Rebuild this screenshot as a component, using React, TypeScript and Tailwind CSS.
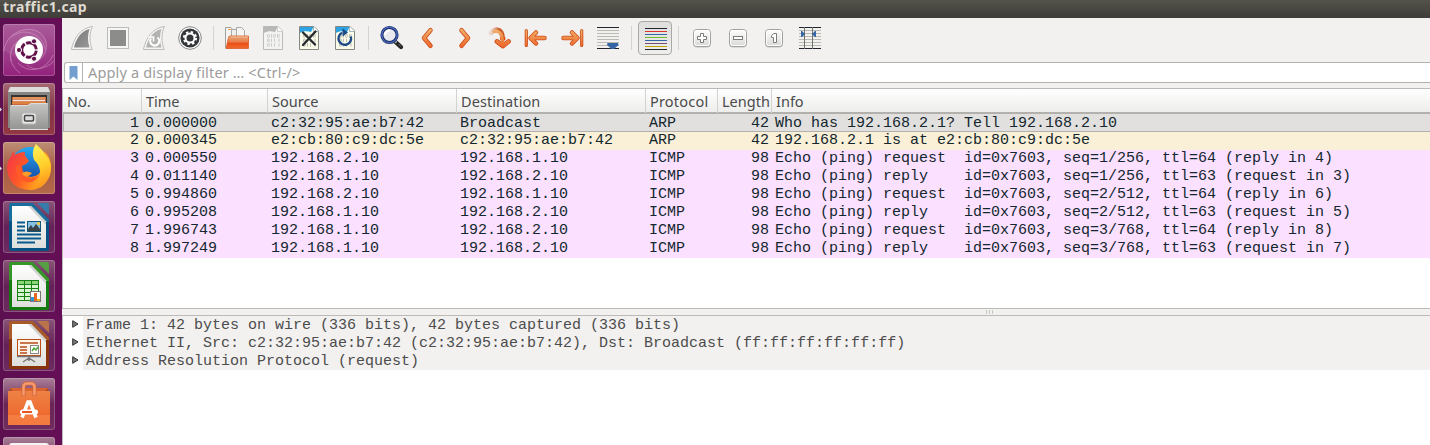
import type { ReactNode } from "react";

const UI = "font-['Noto_Sans',sans-serif]";
const MONO = "font-['Liberation_Mono',monospace]";

/* ---------- toolbar icons, each on a 36x36 grid ---------- */

function Fin({ restart = false }: { restart?: boolean }) {
  return (
    <g>
      <path d="M7.500 29.500C9.500 19 16 8 28.500 6.500C25 13 25.500 22 28 29.500Z" fill="#f6f6f5" stroke="#bcbcba" />
      <path d="M10 27.500C12 19 17 11 25.500 9C23.500 15 23.500 21 25.500 27.500Z" fill={restart ? "#b3b3b1" : "url(#fin)"} />
      {restart && (
        <g fill="none" stroke="#fff" strokeWidth="2.200">
          <path d="M15 18.500A4.500 4.500 0 1 0 21.500 17.500" />
          <path d="M12.500 17h5v4.500" strokeWidth="1.600" />
        </g>
      )}
    </g>
  );
}

function Sheet({ faded = false, children }: { faded?: boolean; children?: ReactNode }) {
  return (
    <g>
      <path d="M8.500 6.500H23L27.500 11V29.500H8.500Z" fill={faded ? "#f3f3f2" : "#fbfbea"} stroke={faded ? "#b9b9b7" : "#858984"} />
      <path d="M9 7H22.500L20 12C16 10.500 12 11 9 13Z" fill={faded ? "#b8b8b6" : "#2ba3e4"} />
      <path d="M22.500 6.500V11.500H27.500" fill="#fff" stroke={faded ? "#c6c6c4" : "#92a2a8"} strokeWidth=".8" />
      <g fill="none" stroke={faded ? "#c6c6c4" : "#b4b6aa"} strokeWidth=".9">
        {[14.500, 19, 23.500].map((y, i) => (
          <g key={y}>
            <rect x="12.500" y={y} width="1.800" height="2.800" rx=".7" />
            <path d={`M16.500 ${y - 0.300}v3.400M${i === 0 ? 22.500 : 19.500} ${y - 0.300}v3.400M24 ${y - 0.300}v3.400`} />
          </g>
        ))}
        <rect x="18.500" y="14.500" width="1.800" height="2.800" rx=".7" />
      </g>
      {children}
    </g>
  );
}

function Glow({ d, w = 2.800 }: { d: string; w?: number }) {
  return (
    <g fill="none" strokeLinecap="round" strokeLinejoin="round">
      <path d={d} stroke="#cf4f1c" strokeWidth={w + 1.700} />
      <path d={d} stroke="url(#orange)" strokeWidth={w} />
    </g>
  );
}

function Lines() {
  return (
    <g>
      {[10, 13, 16, 19, 22, 25].map((y) => (
        <rect key={y} x="7" y={y} width="22" height="1" fill="#b8bbb2" />
      ))}
      <path d="M7 7.500H29M7 28.500H29" stroke="#20262b" />
    </g>
  );
}

function Key({ children }: { children: ReactNode }) {
  return (
    <g>
      <rect x="9.500" y="10.500" width="17" height="17" rx="3" fill="#c4c4c1" />
      <rect x="9.500" y="9.500" width="17" height="17" rx="3" fill="url(#key)" stroke="#a0a09d" />
      <rect x="10.500" y="10.500" width="15" height="15" rx="2" fill="none" stroke="#fff" />
      <g fill="#fff" stroke="#7b7c78" strokeWidth="1">{children}</g>
    </g>
  );
}

const icons: Record<string, ReactNode> = {
  start: <Fin />,
  stop: (
    <g>
      <rect x="7.500" y="7.500" width="21" height="21" fill="#f6f6f5" stroke="#bcbcba" />
      <rect x="10" y="10" width="16" height="16" fill="#8c8c8a" />
    </g>
  ),
  restart: <Fin restart />,
  options: (
    <g>
      <circle cx="18" cy="18" r="11.300" fill="#fff" stroke="#858583" />
      <circle cx="18" cy="18" r="9.600" fill="#33373a" />
      <circle cx="18" cy="18" r="6" fill="none" stroke="#fff" strokeWidth="2.200" strokeDasharray="2.360 2.350" />
      <circle cx="18" cy="18" r="4.500" fill="none" stroke="#fff" strokeWidth="2" />
    </g>
  ),
  open: (
    <g>
      <path d="M6.500 7.500H12L13.500 9.500V28H6.500Z" fill="#f4f4f2" stroke="#a1a19e" />
      <path d="M9 9.500h3" stroke="#ffa040" />
      <path d="M12.500 9.500H19L22.500 13V21H12.500Z" fill="#eeeeec" stroke="#aaa" />
      <path d="M17.500 7.500H22.500L25.500 10.500V20H17.500Z" fill="#f5f5f4" stroke="#aaa" />
      <path d="M9.500 17.500Q9.500 16 11 16H29.500V28.500H7Z" fill="url(#folder)" stroke="#dd5a25" strokeWidth=".8" />
      <path d="M11 17H29" stroke="#f0bd98" />
    </g>
  ),
  save: <Sheet faded />,
  close: (
    <Sheet>
      <path d="M12 12.500L24 24.500M24.500 11.500L12 25" stroke="#252a2d" strokeWidth="2.300" strokeLinecap="round" />
    </Sheet>
  ),
  reload: (
    <Sheet>
      <path d="M15 12.800A6.300 6.300 0 1 0 23.800 16.500" fill="none" stroke="#1e4a88" strokeWidth="2.400" />
      <path d="M15.500 8.500L21 12.500L15.500 16.500Z" fill="#1e4a88" />
    </Sheet>
  ),
  find: (
    <g>
      <path d="M20.500 21L27 27" stroke="#242424" strokeWidth="4.300" strokeLinecap="round" />
      <path d="M20 20L22.500 22.500" stroke="#aaa" strokeWidth="2.500" />
      <path d="M24.500 24L27 26.500" stroke="#77746f" strokeWidth="1" />
      <circle cx="15.500" cy="15" r="7.600" fill="#e7e9ef" stroke="#18265f" strokeWidth="3" />
      <circle cx="15.500" cy="15" r="7.700" fill="none" stroke="#4666b8" strokeWidth="1.500" />
      <path d="M11 15A4.500 4.500 0 0 1 16 10.500" fill="none" stroke="#fff" strokeWidth="2" />
    </g>
  ),
  back: <Glow d="M20.500 10.200L14 18L20.500 25.800" />,
  forward: <Glow d="M15.500 10.200L22 18L15.500 25.800" />,
  go: (
    <g>
      <path d="M9 13Q12 9.500 15.500 9.800Q20.300 10.500 20.800 19" fill="none" stroke="url(#tail)" strokeWidth="4.800" strokeLinecap="round" />
      <path d="M20.800 17V20" stroke="#d95019" strokeWidth="5" />
      <path d="M15 21.500L21 26L26.500 21.500" fill="none" stroke="#cf4f1c" strokeWidth="4.800" strokeLinecap="round" strokeLinejoin="round" />
      <path d="M12 11.500Q20.300 9 20.800 24M15 21.500L21 26L26.500 21.500" fill="none" stroke="url(#orange)" strokeWidth="3" strokeLinecap="round" strokeLinejoin="round" />
    </g>
  ),
  first: (
    <g>
      <Glow d="M13.500 18H26.500M18 12.500L12.500 18L18 23.500" w={2.800} />
      <Glow d="M8.300 10.500V25.500" w={1.500} />
    </g>
  ),
  last: (
    <g>
      <Glow d="M22.500 18H9.500M18 12.500L23.500 18L18 23.500" w={2.800} />
      <Glow d="M27.700 10.500V25.500" w={1.500} />
    </g>
  ),
  scroll: (
    <g>
      <Lines />
      <path d="M17.500 23H28L28.500 25L24 29H21.500L17 25Z" fill="#3465a4" />
    </g>
  ),
  plus: (
    <Key>
      <path d="M16.500 13.500H19.500V16.500H22.500V19.500H19.500V22.500H16.500V19.500H13.500V16.500H16.500Z" />
    </Key>
  ),
  minus: (
    <Key>
      <rect x="13.500" y="16.500" width="9" height="3" />
    </Key>
  ),
  one: (
    <Key>
      <path d="M15.500 15.500L18 13.500H20.500V22.500H17.500V17.500H15.500Z" />
    </Key>
  ),
  columns: (
    <g>
      <Lines />
      <path d="M12.500 7V29M20.500 7V29" stroke="#6f726d" />
      <path d="M9 11H10L13 14L10 17H9ZM24 11H23L20 14L23 17H24Z" fill="#3465a4" />
    </g>
  ),
  colour: (
    <g>
      {["#20262b", "#e0312b", "#3465a4", "#73b92a", "#3465a4", "#75507b", "#c4a000", "#20262b"].map((c, i) => (
        <rect key={i} x="8" y={8 + i * 3} width="22" height="1" fill={c} />
      ))}
    </g>
  ),
};

const groups = [
  ["start", "stop", "restart", "options"],
  ["open", "save", "close", "reload"],
  ["find", "back", "forward", "go", "first", "last", "scroll"],
  ["colour"],
  ["plus", "minus", "one", "columns"],
];

function Defs() {
  return (
    <svg width="0" height="0" className="absolute">
      <defs>
        <linearGradient id="fin" x1="0" y1="0" x2="1" y2="1"><stop stopColor="#777" /><stop offset="1" stopColor="#999" /></linearGradient>
        <linearGradient id="orange" gradientUnits="userSpaceOnUse" x1="0" y1="8" x2="0" y2="28"><stop stopColor="#f2b66e" /><stop offset="1" stopColor="#ee6327" /></linearGradient>
        <linearGradient id="tail"><stop stopColor="#d89a78" stopOpacity=".3" /><stop offset=".7" stopColor="#cc5c28" /></linearGradient>
        <linearGradient id="folder" x1="0" y1="0" x2="0" y2="1"><stop stopColor="#e5a778" /><stop offset=".5" stopColor="#eb7c48" /><stop offset=".55" stopColor="#e84d17" /><stop offset="1" stopColor="#f06a2e" /></linearGradient>
        <linearGradient id="key" x1="0" y1="0" x2="0" y2="1"><stop stopColor="#fff" /><stop offset="1" stopColor="#d8d8d6" /></linearGradient>
        <linearGradient id="steel" x1="0" y1="0" x2="0" y2="1"><stop stopColor="#c6c6c4" /><stop offset="1" stopColor="#929290" /></linearGradient>
        <linearGradient id="bag" x1="0" y1="0" x2="0" y2="1"><stop stopColor="#ee8246" /><stop offset=".7" stopColor="#ee6a2e" /><stop offset=".72" stopColor="#f47c42" /><stop offset="1" stopColor="#f47a3e" /></linearGradient>
        <linearGradient id="fox" x1="0" y1="0" x2="1" y2=".4"><stop stopColor="#f5324a" /><stop offset=".5" stopColor="#ff5b26" /><stop offset="1" stopColor="#ffb81c" /></linearGradient>
        <linearGradient id="flame" x1=".3" y1="0" x2=".5" y2="1"><stop stopColor="#fff15a" /><stop offset=".5" stopColor="#ffd12c" /><stop offset="1" stopColor="#ff8b1a" /></linearGradient>
        <linearGradient id="globe" x1="0" y1="0" x2="0" y2="1"><stop stopColor="#25a9f2" /><stop offset="1" stopColor="#153c9b" /></linearGradient>
        <linearGradient id="paper" x1="0" y1="0" x2="0" y2="1"><stop stopColor="#fff" /><stop offset="1" stopColor="#dededc" /></linearGradient>
      </defs>
    </svg>
  );
}

/* ---------- launcher icons, each on a 52x52 grid ---------- */

function OfficeDoc({ dark, light, children }: { dark: string; light: string; children: ReactNode }) {
  return (
    <g>
      <path d="M8.500 2H29.500L46 18.500V48Q46 50 44 50H8.500Q6 50 6 47.500V4.500Q6 2 8.500 2Z" fill={dark} />
      <path d="M8.500 2H29.500L46 18.500V21H43L28 5H9V20H6V4.500Q6 2 8.500 2Z" fill={light} opacity=".55" />
      <path d="M34 2H44Q46 2 46 4V14Z" fill={light} opacity=".85" />
      <path d="M9 5H28L43 20.500V47H9Z" fill="url(#paper)" />
      <path d="M28 5L43 20.500V24L25 5Z" fill="#d2d2d0" />
      {children}
    </g>
  );
}

const dash = (
  <g>
    <g fill="none" stroke="#e7b4dc" opacity=".45">
      <path d="M1 27C2 5 37 -4 43 18C46 34 31 43 19 37" fill="#fff" fillOpacity=".14" />
      <path d="M7 14C20 2 40 10 42 25M8 37C5 19 20 9 34 17M17 49C2 38 6 19 20 17M50 31C43 47 25 50 15 39M51 37C42 46 30 47 24 41" />
    </g>
    <circle cx="26" cy="26" r="14" fill="#fff" />
    <circle cx="26" cy="26" r="7.300" fill="none" stroke="#601249" strokeWidth="2.900" strokeDasharray="13.800 1.490" transform="rotate(5 26 26)" />
    <g fill="#601249" stroke="#fff" strokeWidth="1">
      <circle cx="16" cy="26" r="2.600" /><circle cx="31" cy="17.300" r="2.600" /><circle cx="31" cy="34.700" r="2.600" />
    </g>
  </g>
);

const files = (
  <g>
    <path d="M7 4H45L47 7V45H5V7Z" fill="#858583" />
    <path d="M7 4H45L47 9H5Z" fill="#dedddb" />
    <path d="M8 12H44V23H8Z" fill="#36322f" />
    <path d="M9 14H43V23H9Z" fill="#c9693c" />
    <path d="M10 15H42" stroke="#eca263" strokeWidth="1.500" />
    <path d="M10 17.500H42" stroke="#f7e6dc" strokeWidth="1.500" />
    <path d="M9 20H43" stroke="#e58a3e" strokeWidth="1.500" />
    <path d="M8 22H25L28 20H45V47H7V23Z" fill="url(#steel)" />
    <path d="M8 22.500H25L28 20.500H44M7 46.500H45" stroke="#ddd" fill="none" />
    <rect x="19" y="30" width="14" height="11" rx="2" fill="#e8e8e6" stroke="#b9b9b7" />
    <rect x="21.500" y="32.500" width="9" height="5.500" rx="1" fill="#ddd" stroke="#444" strokeWidth="1.500" />
  </g>
);

const firefox = (
  <g>
    <circle cx="27" cy="24" r="19" fill="url(#globe)" />
    <path d="M10 9L12 13Q16 10 22 10Q21 13 23 15L26 19Q23 23 19 24Q19 34 28 35Q38 34 39 25L42 9Q49 18 48 27Q45 47 27 48Q6 47 4 27Q4 19 9 13Z" fill="url(#fox)" />
    <path d="M33 2Q41 9 46 17Q51 31 43 40Q37 47 26 48Q38 42 37 29Q36 22 31 18Q28 9 33 2Z" fill="url(#flame)" />
    <path d="M19 31Q23 28 29 31Q25 36 20 34Z" fill="#ff9a28" />
    <path d="M18 24Q17 31 21 34Q28 39 36 33Q31 42 22 40Q11 34 13 23Z" fill="#ff5a28" />
  </g>
);

const writer = (
  <OfficeDoc dark="#075282" light="#2885b5">
    <path d="M14 21.500H22M14 25.500H22M14 29.500H22M14 33.500H38M14 37.500H38M14 41.500H32" stroke="#075a8b" strokeWidth="1.800" />
    <rect x="24.500" y="20.500" width="13" height="10" fill="#86bfe2" stroke="#135476" />
    <path d="M25 30V28L28 24L30 27L33 23L37 28V30Z" fill="#3a4246" />
    <circle cx="35.500" cy="22.500" r="1.500" fill="#f8ce38" />
  </OfficeDoc>
);

const calc = (
  <OfficeDoc dark="#147b11" light="#4fae3c">
    <rect x="14" y="20" width="22" height="21" fill="#178012" />
    {[20, 24, 28, 32, 36].map((y, i) => (
      <path key={y} d={`M15 ${y + 2.500}H21M22 ${y + 2.500}H28M29 ${y + 2.500}H35`} stroke={i === 0 ? "#8bd37d" : "#d7f4d1"} strokeWidth="3" />
    ))}
    <rect x="27.500" y="31.500" width="10" height="10" fill="#fff" stroke="#777" />
    <path d="M29.500 41V37" stroke="#2996dc" strokeWidth="3" /><path d="M32.500 41V33" stroke="#e66820" strokeWidth="3" /><path d="M35.500 41V39" stroke="#efb21d" strokeWidth="3" />
  </OfficeDoc>
);

const impress = (
  <OfficeDoc dark="#873409" light="#c37a43">
    <rect x="14.500" y="20.500" width="23" height="16" fill="#fff4e9" stroke="#bd4c13" />
    <path d="M17 24H35M17 28H24M17 31H24M17 34H24" stroke="#b84b18" strokeWidth="1.600" />
    <rect x="27.500" y="26.500" width="8" height="8" fill="#fff" stroke="#888" />
    <path d="M29 32L31 29L33 31L35 28" stroke="#43a52e" fill="none" strokeWidth="1.400" />
    <path d="M14 37.500H38M26 38V42M26 39L20 43M26 39L32 43" stroke="#777" strokeWidth="1.500" />
  </OfficeDoc>
);

const software = (
  <g>
    <path d="M7 10H45V15H7Z" fill="#b64b22" />
    <path d="M7 10L10 13H42L45 10" fill="#d9642f" />
    <path d="M5 13H47V47H5Z" fill="url(#bag)" />
    <path d="M20.500 18V9Q20.500 5.500 24 5.500H28Q31.500 5.500 31.500 9V18" fill="none" stroke="#cf5f35" strokeWidth="4" />
    <path d="M20.500 17.500V9Q20.500 5.500 24 5.500H28Q31.500 5.500 31.500 9V17.500" fill="none" stroke="#f59a6c" strokeWidth="2.600" />
    <path d="M19 39.500L25 24H27L33 39.500" fill="none" stroke="#fff" strokeWidth="3.600" />
    <rect x="17" y="31.500" width="18" height="5" rx="2.500" fill="#fff" />
    <path d="M19 34H29" stroke="#e8581e" strokeWidth="2" />
  </g>
);

const tiles: { icon: ReactNode; tone: string; open?: boolean }[] = [
  { icon: dash, tone: "bg-linear-to-b from-[#a95b99] to-[#94227d]" },
  { icon: files, tone: "bg-linear-to-b from-[#a46a74] via-[#843346] to-[#933844]", open: true },
  { icon: firefox, tone: "bg-linear-to-b from-[#bd8e75] via-[#a55c44] to-[#b6694a]", open: true },
  { icon: writer, tone: "bg-linear-to-b from-[#895577] via-[#652057] to-[#6d2b60]" },
  { icon: calc, tone: "bg-linear-to-b from-[#895577] via-[#652057] to-[#6d2b60]" },
  { icon: impress, tone: "bg-linear-to-b from-[#895577] via-[#652057] to-[#6d2b60]" },
  { icon: software, tone: "bg-linear-to-b from-[#a98098] via-[#6a2456] to-[#702c5e]" },
  { icon: <rect x="6" y="6" width="40" height="40" rx="3" fill="#f4f4f4" />, tone: "bg-linear-to-b from-[#a98098] via-[#6a2456] to-[#702c5e]" },
];

function Launcher() {
  return (
    <aside className="flex h-full w-[62px] shrink-0 flex-col gap-[7px] overflow-hidden bg-linear-to-r from-[#5c1050] to-[#650e57] pt-1.5">
      {tiles.map((t, i) => (
        <div key={i} className="flex shrink-0 items-center">
          <span className="w-[3px]">
            {t.open && <svg width="3" height="5" className="block"><path d="M0 .5L2 2.500L0 4.500Z" fill="#ddd" /></svg>}
          </span>
          <div className={`size-[52px] overflow-hidden rounded-[3px] ring-1 ring-white/20 ring-inset ${t.tone}`}>
            <svg width="52" height="52" viewBox="0 0 52 52" className="block">{t.icon}</svg>
          </div>
        </div>
      ))}
    </aside>
  );
}

function Toolbar() {
  return (
    <div className="flex h-[44px] shrink-0 items-start pt-0.5 pl-0.5">
      {groups.map((g, gi) => (
        <div key={gi} className="flex">
          {gi > 0 && (
            <div className="flex h-9 w-[11px] items-center justify-center">
              <span className="h-6 w-px bg-[#d3d3d0]" />
            </div>
          )}
          {g.map((name) =>
            name === "colour" ? (
              <div key={name} className="flex h-9 w-9 items-center justify-center">
                <div className="flex size-[34px] items-center justify-center overflow-hidden rounded-[4px] border border-[#a9a9a6] bg-linear-to-b from-[#dededc] to-[#eeeeed]">
                  <svg width="36" height="36" viewBox="0 0 36 36" className="block shrink-0">{icons[name]}</svg>
                </div>
              </div>
            ) : (
              <svg key={name} width="36" height="36" viewBox="0 0 36 36" className="block">{icons[name]}</svg>
            ),
          )}
        </div>
      ))}
    </div>
  );
}

const GRID = "grid grid-cols-[79px_126px_189px_189px_72px_54px_1fr]";

const headers: [string, string][] = [
  ["No.", "tracking-[0px]"],
  ["Time", "tracking-[0px]"],
  ["Source", "tracking-[0px]"],
  ["Destination", "tracking-[0.08px]"],
  ["Protocol", "tracking-[0.2px]"],
  ["Length", "tracking-[0px]"],
  ["Info", "tracking-[0px]"],
];

const packets = [
  ["1", "0.000000", "c2:32:95:ae:b7:42", "Broadcast", "ARP", "42", "Who has 192.168.2.1? Tell 192.168.2.10"],
  ["2", "0.000345", "e2:cb:80:c9:dc:5e", "c2:32:95:ae:b7:42", "ARP", "42", "192.168.2.1 is at e2:cb:80:c9:dc:5e"],
  ["3", "0.000550", "192.168.2.10", "192.168.1.10", "ICMP", "98", "Echo (ping) request  id=0x7603, seq=1/256, ttl=64 (reply in 4)"],
  ["4", "0.011140", "192.168.1.10", "192.168.2.10", "ICMP", "98", "Echo (ping) reply    id=0x7603, seq=1/256, ttl=63 (request in 3)"],
  ["5", "0.994860", "192.168.2.10", "192.168.1.10", "ICMP", "98", "Echo (ping) request  id=0x7603, seq=2/512, ttl=64 (reply in 6)"],
  ["6", "0.995208", "192.168.1.10", "192.168.2.10", "ICMP", "98", "Echo (ping) reply    id=0x7603, seq=2/512, ttl=63 (request in 5)"],
  ["7", "1.996743", "192.168.1.10", "192.168.2.10", "ICMP", "98", "Echo (ping) request  id=0x7603, seq=3/768, ttl=64 (reply in 8)"],
  ["8", "1.997249", "192.168.1.10", "192.168.2.10", "ICMP", "98", "Echo (ping) reply    id=0x7603, seq=3/768, ttl=63 (request in 7)"],
];

function rowTone(i: number) {
  if (i === 0) return "bg-[#e2e0df] pt-px shadow-[inset_1px_-1px_0_#b3b1ae]";
  if (i === 1) return "bg-[#faf0d7]";
  return "bg-[#fce0ff]";
}

function PacketList() {
  return (
    <div className="h-[221px] shrink-0 border-y border-l border-[#bcbab6] bg-white">
      <div className={`${GRID} h-[25px] border-b-2 border-[#b3b1ae] bg-linear-to-b from-white to-[#ededec] ${UI} text-[14.5px] leading-[24px] text-[#4a4a4a]`}>
        {headers.map(([h, t], i) => (
          <div key={h} className={`whitespace-nowrap pl-1 ${i < 6 ? "border-r border-[#d2d2d0]" : ""} ${t}`}>{h}</div>
        ))}
      </div>
      {packets.map((p, i) => (
        <div key={i} className={`${GRID} h-[18px] ${rowTone(i)} ${MONO} text-[15px] leading-[17px] whitespace-pre text-[#12272e]`}>
          {p.map((c, j) => (
            <div key={j} className={j === 0 || j === 5 ? "pr-[3px] text-right" : "pl-[3px]"}>{c}</div>
          ))}
        </div>
      ))}
    </div>
  );
}

const details = [
  "Frame 1: 42 bytes on wire (336 bits), 42 bytes captured (336 bits)",
  "Ethernet II, Src: c2:32:95:ae:b7:42 (c2:32:95:ae:b7:42), Dst: Broadcast (ff:ff:ff:ff:ff:ff)",
  "Address Resolution Protocol (request)",
];

export default function App() {
  return (
    <div className="flex h-[445px] w-[1430px] flex-col overflow-hidden bg-[#f2f1f0]">
      <Defs />
      <header className={`h-[18px] shrink-0 bg-linear-to-b from-[#53524b] to-[#3e3d38] pl-[3px] ${UI} text-[14px] leading-[13px] font-bold tracking-[0.42px] text-[#dfdbd2]`}>
        traffic1.cap
      </header>
      <div className="flex min-h-0 flex-1">
        <Launcher />
        <main className="flex min-w-0 flex-1 flex-col">
          <Toolbar />
          <div className="flex h-[21px] shrink-0 pl-0.5">
            <div className="flex flex-1 items-center rounded-l-[3px] border border-r-0 border-[#b4b2af] bg-white">
              <span className="flex h-full w-[18px] items-center justify-center border-r border-[#b4b2af]">
                <svg width="9" height="14" className="block"><path d="M.5 0H8.500V14L4.500 10.500L.5 14Z" fill="#729fcf" /></svg>
              </span>
              <span className={`pl-[5px] ${UI} text-[14.5px] leading-[19px] tracking-[0.16px] whitespace-nowrap text-[#9c9c9b]`}>Apply a display filter … &lt;Ctrl-/&gt;</span>
            </div>
          </div>
          <div className="h-[5px] shrink-0" />
          <PacketList />
          <div className="flex h-[6px] shrink-0 items-center gap-[2px] pl-[924px]">
            <span className="h-1 w-px bg-[#c4c4c1]" />
            <span className="h-1 w-px bg-[#c4c4c1]" />
            <span className="h-1 w-px bg-[#c4c4c1]" />
          </div>
          <section className="flex-1 border-t border-l border-[#bcbab6] bg-white">
            {details.map((d) => (
              <div key={d} className="flex h-[18px]">
                <span className="flex w-5 items-center pb-[2px] pl-[9px]">
                  <svg width="7" height="8" className="block"><path d="M.7 .7L6 4L.7 7.300Z" fill="#777" stroke="#333" /></svg>
                </span>
                <span className={`flex-1 bg-[#f2f1f0] pt-px pl-[3px] ${MONO} text-[15px] leading-[17px] text-[#4c4c4c]`}>{d}</span>
              </div>
            ))}
          </section>
        </main>
      </div>
    </div>
  );
}
